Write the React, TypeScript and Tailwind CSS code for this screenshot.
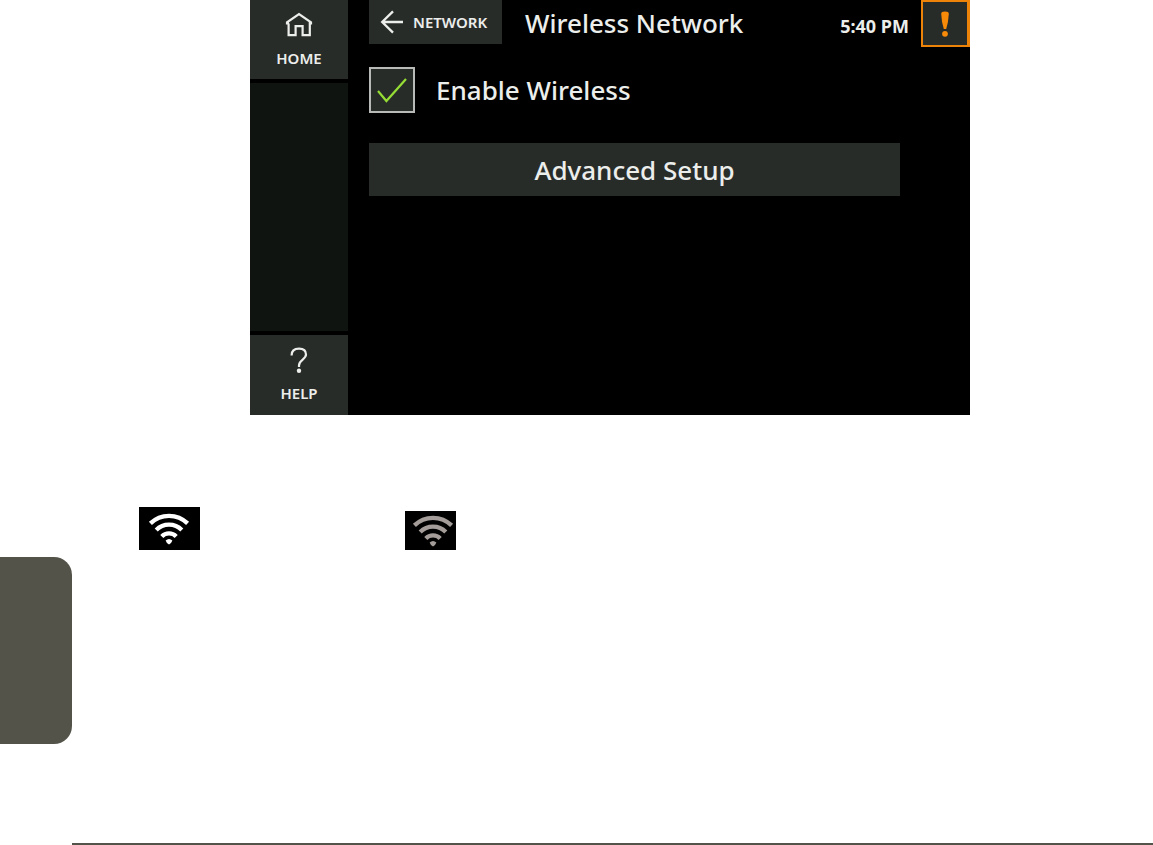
import { useState } from "react";

function WifiIcon({ className }: { className: string }) {
  return (
    <svg viewBox="0 0 42 32" className={className} fill="none" stroke="currentColor" strokeWidth="4.3" aria-hidden="true">
      <path d="M2.4 10.4A26.5 26.5 0 0 1 39.6 10.4" />
      <path d="M8.2 17A18 18 0 0 1 33.8 17" />
      <path d="M13.8 23.4A10 10 0 0 1 28.2 23.4" />
      <path d="M17.6 27.6Q21 24.6 24.4 27.6Q23.8 29.8 21 31.6Q18.2 29.8 17.6 27.6Z" fill="currentColor" stroke="none" />
    </svg>
  );
}

function HomeIcon() {
  return (
    <svg viewBox="0 0 28 26" className="h-[26px] w-7" fill="none" stroke="currentColor" strokeWidth="2.2" aria-hidden="true">
      <path d="M4 11.4H2V10.4L14 2L26 10.4V11.4H24.8V23.2H17.6V14.2H10.6V23.2H3.6V11.4" />
    </svg>
  );
}

function HelpIcon() {
  return (
    <svg viewBox="0 0 18 26" className="h-[26px] w-[18px]" fill="none" stroke="currentColor" strokeWidth="2.2" aria-hidden="true">
      <path d="M1.6 8.4C1.6 4 4.6 1.7 9 1.7C13.4 1.7 16 4 16 7.6C16 12.4 9 12.8 9 18.4V20" />
      <circle cx="9" cy="23.8" r="2.2" fill="currentColor" stroke="none" />
    </svg>
  );
}

function BackIcon() {
  return (
    <svg viewBox="0 0 24 24" className="h-6 w-6" fill="none" stroke="currentColor" strokeWidth="2.3" aria-hidden="true">
      <path d="M13 1.4L2.2 12L13 22.6M2 12H23" />
    </svg>
  );
}

export default function App() {
  const [enabled, setEnabled] = useState(true);

  return (
    <div className="flex min-h-screen flex-col bg-white font-['Noto_Sans','Open_Sans',sans-serif] text-[#eceeec]">
      <main className="ml-[250px] flex h-[415px] w-[720px] bg-black">
        <nav className="flex w-[98px] flex-col gap-1">
          <button className="flex h-[79px] flex-col items-center bg-[#282c29] pt-3">
            <HomeIcon />
            <span className="mt-2 text-[15px] leading-6 font-semibold">HOME</span>
          </button>
          <div className="flex-1 bg-[#0f1410]" />
          <button className="flex h-20 flex-col items-center bg-[#282c29] pt-3">
            <HelpIcon />
            <span className="mt-2 text-[15px] leading-6 font-semibold">HELP</span>
          </button>
        </nav>

        <section className="flex flex-1 flex-col pl-[21px]">
          <header className="flex h-12 items-start">
            <button className="flex h-11 w-[133px] items-center gap-[9px] bg-[#282c29] pl-[11px]">
              <BackIcon />
              <span className="text-[15px] font-semibold">NETWORK</span>
            </button>
            <h1 className="ml-[23px] text-[26px] leading-[46px] font-medium">Wireless Network</h1>
            <time className="mr-3 ml-auto text-[18px] leading-[52px] font-bold">5:40 PM</time>
            <button aria-label="Alerts" className="flex h-[47px] w-[49px] items-center justify-center border-2 border-r-3 border-[#ee8309] bg-[#282c29] text-[#f78a08]">
              <svg viewBox="0 0 8 26" className="h-[26px] w-2" fill="currentColor" aria-hidden="true">
                <path d="M0.2 3Q0.2 0.6 4 0.6Q7.8 0.6 7.8 3Q7.4 11 5.2 18H2.8Q0.6 11 0.2 3Z" />
                <circle cx="4" cy="22.8" r="2.9" />
              </svg>
            </button>
          </header>

          <label className="mt-[19px] flex items-center gap-[21px] self-start">
            <span className="grid h-[46px] w-[46px] place-items-center">
              <input
                type="checkbox"
                checked={enabled}
                onChange={(e) => setEnabled(e.target.checked)}
                className="col-start-1 row-start-1 h-[46px] w-[46px] appearance-none border-2 border-[#b8bab8] bg-[#282c29]"
              />
              {enabled && (
                <svg viewBox="0 0 30 25" className="pointer-events-none col-start-1 row-start-1 h-[25px] w-[30px]" fill="none" stroke="#95dd35" strokeWidth="2.2" aria-hidden="true">
                  <path d="M1 13L9.4 23L29 1" />
                </svg>
              )}
            </span>
            <span className="text-[26px] leading-8 font-medium">Enable Wireless</span>
          </label>

          <button className="mt-[30px] mr-[70px] h-[53px] bg-[#282c29] text-[26px] leading-8 font-medium">Advanced Setup</button>
        </section>
      </main>

      <div className="mt-[92px] ml-[139px] flex h-[43px] items-end gap-[205px]">
        <div className="flex h-[43px] w-[61px] items-center bg-black pl-[9px] text-white">
          <WifiIcon className="h-8 w-[42px]" />
        </div>
        <div className="flex h-[39px] w-[51px] items-center bg-black pl-[7px] text-[#a39c98]">
          <WifiIcon className="h-8 w-[42px]" />
        </div>
      </div>

      <aside className="mt-[7px] h-[187px] w-[72px] rounded-r-[18px] bg-[#53534a]" />
      <footer className="mt-auto ml-[72px] h-0.5 bg-[#53534a]" />
    </div>
  );
}
